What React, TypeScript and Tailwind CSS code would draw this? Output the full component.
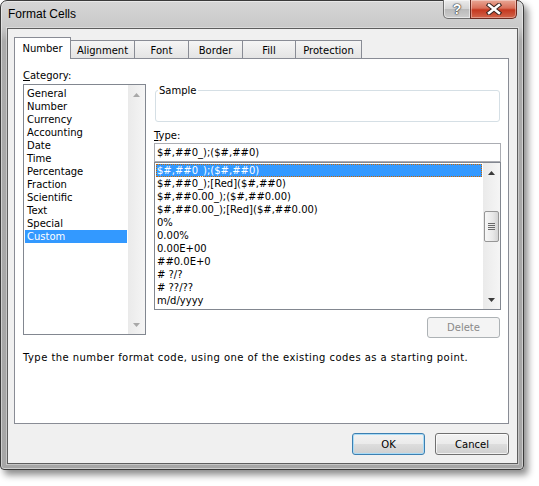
import React from 'react'

const categories = [
  'General',
  'Number',
  'Currency',
  'Accounting',
  'Date',
  'Time',
  'Percentage',
  'Fraction',
  'Scientific',
  'Text',
  'Special',
  'Custom',
]

const formats = [
  '$#,##0_);($#,##0)',
  '$#,##0_);[Red]($#,##0)',
  '$#,##0.00_);($#,##0.00)',
  '$#,##0.00_);[Red]($#,##0.00)',
  '0%',
  '0.00%',
  '0.00E+00',
  '##0.0E+0',
  '# ?/?',
  '# ??/??',
  'm/d/yyyy',
]

const tabs = [
  { name: 'Alignment', width: 'w-[65px]' },
  { name: 'Font', width: 'w-[55px]' },
  { name: 'Border', width: 'w-[55px]' },
  { name: 'Fill', width: 'w-[54px]' },
  { name: 'Protection', width: 'w-[67px]' },
]

function Arrow({ up, color }: { up: boolean; color: string }) {
  return (
    <svg width="7" height="4" viewBox="0 0 7 4">
      <polygon points={up ? '0,4 3.5,0 7,4' : '0,0 3.5,4 7,0'} fill={color} />
    </svg>
  )
}

function ScrollBar({ enabled }: { enabled: boolean }) {
  const color = enabled ? '#3a3a3a' : '#a8a8a8'
  return (
    <div className="w-[17px] flex flex-col bg-[linear-gradient(to_right,#eaeaea,#f5f5f5)]">
      <div className="h-[17px] flex items-center justify-center pt-[3px]">
        <Arrow up color={color} />
      </div>
      {enabled && (
        <>
          <div className="h-[31px]" />
          <div className="h-[31px] mx-px border border-[#969696] rounded-[2px] bg-[linear-gradient(to_right,#f7f7f7,#e8e8e8_60%,#d4d4d4)] flex flex-col items-center justify-center gap-[1px]">
            <div className="w-[7px] h-px bg-[#6a6a6a]" />
            <div className="w-[7px] h-px bg-[#6a6a6a]" />
            <div className="w-[7px] h-px bg-[#6a6a6a]" />
            <div className="w-[7px] h-px bg-[#6a6a6a]" />
          </div>
        </>
      )}
      <div className="flex-1" />
      <div className="h-[17px] flex items-center justify-center pb-px">
        <Arrow up={false} color={color} />
      </div>
    </div>
  )
}

export default function App() {
  return (
    <div className="w-[539px] h-[486px] bg-white font-['DejaVu_Sans',sans-serif] text-[10px] text-black">
      {/* Window frame */}
      <div className="w-[524px] h-[470px] flex flex-col border border-[#3a3a3a] rounded-t-[7px] rounded-b-[4px] bg-[linear-gradient(to_bottom,#d6d6d6_0px,#c9c9c9_26px,#ababab_40px,#a6a6a6_100%)] shadow-[4px_5px_7px_rgba(0,0,0,0.45),inset_0_0_0_1px_rgba(255,255,255,0.45)]">
        {/* Title bar */}
        <div className="h-[27px] flex items-start">
          <div className="pl-[7px] pt-[6px] font-['Liberation_Sans',sans-serif] text-[12px] leading-[15px] text-black">
            Format Cells
          </div>
          <div className="ml-auto mr-[6px] -mt-px flex">
            <div className="w-[28px] h-[19px] border border-t-0 border-[#6e6e6e] rounded-bl-[5px] bg-[linear-gradient(to_bottom,#ececec_0%,#d4d4d4_48%,#bababa_52%,#cdcdcd_100%)] shadow-[inset_0_0_0_1px_rgba(255,255,255,0.5)] flex items-center justify-center">
              <span className="font-['Liberation_Sans',sans-serif] font-bold text-[14px] leading-[14px] text-white [text-shadow:0_0_1px_#333,0_0_1px_#333,0_0_2px_#444]">
                ?
              </span>
            </div>
            <div className="w-[47px] h-[19px] -ml-px border border-t-0 border-[#6b2a20] rounded-br-[5px] bg-[linear-gradient(to_bottom,#e9a896_0%,#d9705a_45%,#c4381f_55%,#d2664c_100%)] shadow-[inset_0_0_0_1px_rgba(255,255,255,0.35)] flex items-center justify-center">
              <svg width="16" height="12" viewBox="0 0 16 12">
                <path d="M3 2 L13 10 M13 2 L3 10" stroke="#3a2520" strokeWidth="4.5" strokeLinecap="square" />
                <path d="M3 2 L13 10 M13 2 L3 10" stroke="#ffffff" strokeWidth="2.5" strokeLinecap="square" />
              </svg>
            </div>
          </div>
        </div>

        {/* Client area */}
        <div className="ml-[6px] mr-[5px] mb-[5px] flex-1 border border-[#5e5e5e] bg-[#f0f0f0] shadow-[0_0_0_1px_rgba(255,255,255,0.35)] flex flex-col pt-[8px]">
          {/* Tabs */}
          <div className="h-[21px] flex items-end pl-[6px]">
            <div className="relative z-10 w-[57px] h-[22px] -mb-px bg-white border border-b-0 border-[#898c95] flex justify-center pt-[4px] leading-[13px]">
              Number
            </div>
            {tabs.map((tab) => (
              <div
                key={tab.name}
                className={`${tab.width} h-[18px] -ml-px border border-b-0 border-[#898c95] bg-[linear-gradient(to_bottom,#f5f5f5,#e4e4e4)] flex justify-center pt-[3px] leading-[13px]`}
              >
                {tab.name}
              </div>
            ))}
          </div>

          {/* Tab panel */}
          <div className="ml-[6px] w-[495px] h-[366px] border border-[#898c95] bg-white flex flex-col pl-[8px] pt-[10px]">
            <div className="flex">
              {/* Category */}
              <div className="w-[123px] flex flex-col">
                <div className="h-[13px] leading-[13px]">
                  <span className="underline underline-offset-1">C</span>ategory:
                </div>
                <div className="mt-[2px] h-[251px] border border-[#828790] flex">
                  <div className="flex-1 pt-[2px] px-px">
                    {categories.map((c) => (
                      <div
                        key={c}
                        className={`h-[13px] leading-[13px] pl-[2px] ${c === 'Custom' ? 'bg-[#3399ff] text-white' : ''}`}
                      >
                        {c}
                      </div>
                    ))}
                  </div>
                  <ScrollBar enabled={false} />
                </div>
              </div>

              {/* Right side */}
              <div className="ml-[8px] w-[347px] flex flex-col">
                <div className="mt-[21px] mx-px h-[32px] border border-[#d5dfe5] rounded-[3px] relative">
                  <span className="absolute left-[2px] -top-[7px] bg-white px-px leading-[13px]">Sample</span>
                </div>
                <div className="mt-[7px] h-[13px] leading-[13px]">
                  <span className="underline underline-offset-1">T</span>ype:
                </div>
                <div className="mt-px h-[19px] border border-[#abadb3] pl-[2px] leading-[17px] whitespace-pre">
                  $#,##0_);($#,##0)
                </div>
                <div className="h-[148px] border border-[#828790] flex">
                  <div className="flex-1 pt-px px-px">
                    {formats.map((f, i) => (
                      <div
                        key={f}
                        className={`h-[13px] leading-[13px] pl-px whitespace-pre ${i === 0 ? 'bg-[#3399ff] text-white outline-1 outline-dotted outline-[#cc6600] -outline-offset-1' : ''}`}
                      >
                        {f}
                      </div>
                    ))}
                  </div>
                  <ScrollBar enabled />
                </div>
                <div className="mt-[7px] flex justify-end pr-px">
                  <div className="w-[73px] h-[21px] border border-[#adb2b5] rounded-[3px] bg-[#f4f4f4] text-[#8a8a8a] flex items-center justify-center">
                    Delete
                  </div>
                </div>
              </div>
            </div>

            <div className="mt-[13px] leading-[13px] tracking-[0.45px]">
              Type the number format code, using one of the existing codes as a starting point.
            </div>
          </div>

          {/* Buttons */}
          <div className="mt-[9px] flex justify-end gap-[10px] pr-[8px]">
            <div className="w-[73px] h-[22px] border border-[#3c7fb1] rounded-[3px] bg-[linear-gradient(to_bottom,#f2f2f2_0%,#ebebeb_48%,#dddddd_52%,#cfcfcf_100%)] shadow-[inset_0_0_0_1px_#a9dbf6] flex items-center justify-center">
              OK
            </div>
            <div className="w-[74px] h-[22px] border border-[#707070] rounded-[3px] bg-[linear-gradient(to_bottom,#f2f2f2_0%,#ebebeb_48%,#dddddd_52%,#cfcfcf_100%)] shadow-[inset_0_0_0_1px_rgba(255,255,255,0.7)] flex items-center justify-center">
              Cancel
            </div>
          </div>
        </div>
      </div>
    </div>
  )
}
